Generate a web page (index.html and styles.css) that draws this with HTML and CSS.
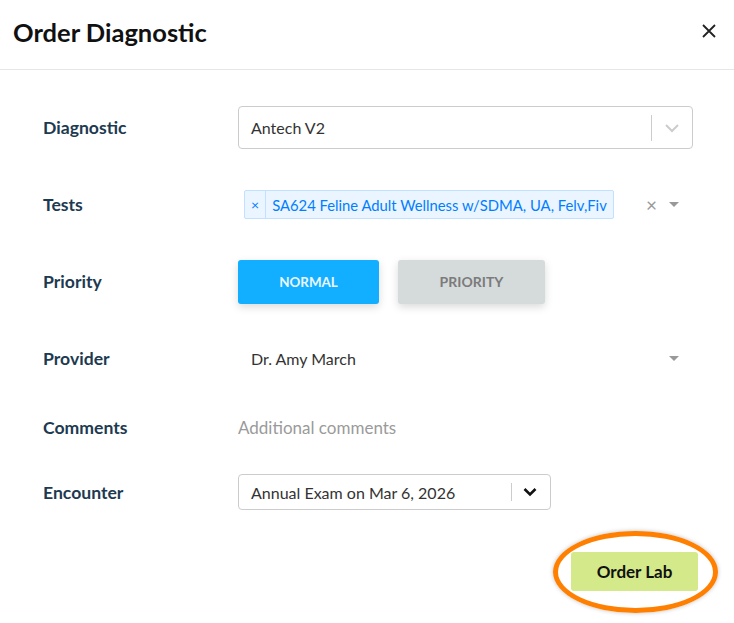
FILE: index.html
```html
<!DOCTYPE html>
<html lang="en">
  <head>
    <meta charset="UTF-8" />
    <title>Order Diagnostic</title>
    <link rel="stylesheet" href="styles.css">
  </head>
  <body>
    <div class="modal">
      <div class="modal-header">
        <h2 class="modal-title">Order Diagnostic</h2>
        <button class="close-btn" aria-label="Close">
          <svg width="16" height="16" viewBox="0 0 16 16">
            <path d="M2 2 L14 14 M14 2 L2 14" stroke="#222" stroke-width="1.8" fill="none" />
          </svg>
        </button>
      </div>

      <div class="modal-body">
        <div class="form-row">
          <label class="form-label">Diagnostic</label>
          <div class="select-box wide">
            <span class="select-value">Antech V2</span>
            <span class="select-sep"></span>
            <svg class="chevron" width="16" height="16" viewBox="0 0 16 16">
              <path d="M2 5 L8 11 L14 5" stroke="#ccc" stroke-width="2" fill="none" />
            </svg>
          </div>
        </div>

        <div class="form-row">
          <label class="form-label">Tests</label>
          <div class="multi-select">
            <div class="tag">
              <span class="tag-remove">×</span>
              <span class="tag-label">SA624 Feline Adult Wellness w/SDMA, UA, Felv,Fiv</span>
            </div>
            <span class="clear-x">×</span>
            <span class="caret"></span>
          </div>
        </div>

        <div class="form-row">
          <label class="form-label">Priority</label>
          <div class="priority-group">
            <button class="priority-btn active">NORMAL</button>
            <button class="priority-btn">PRIORITY</button>
          </div>
        </div>

        <div class="form-row">
          <label class="form-label">Provider</label>
          <div class="plain-select">
            <span class="select-value">Dr. Amy March</span>
            <span class="caret"></span>
          </div>
        </div>

        <div class="form-row short">
          <label class="form-label">Comments</label>
          <div class="comment-input">Additional comments</div>
        </div>

        <div class="form-row short">
          <label class="form-label">Encounter</label>
          <div class="select-box narrow">
            <span class="select-value">Annual Exam on Mar 6, 2026</span>
            <span class="select-sep"></span>
            <svg class="chevron" width="16" height="16" viewBox="0 0 16 16">
              <path d="M2.5 5 L8 10.5 L13.5 5" stroke="#111" stroke-width="2.6" fill="none" />
            </svg>
          </div>
        </div>
      </div>

      <div class="modal-footer">
        <div class="highlight">
          <button class="order-btn">Order Lab</button>
        </div>
      </div>
    </div>
  </body>
</html>
```

FILE: styles.css
```css
body {
  margin: 0;
  background: #fff;
  font-family: Lato, "Liberation Sans", sans-serif;
  color: #333;
}

.modal {
  width: 734px;
  height: 623px;
  overflow: hidden;
}

.modal-header {
  height: 69px;
  border-bottom: 1px solid #e6e6e6;
  display: flex;
  align-items: center;
  justify-content: space-between;
  padding: 0 17px 0 13px;
}

.modal-title {
  margin: 0;
  font-size: 25.5px;
  font-weight: 700;
  color: #111;
  padding-bottom: 6px;
}

.close-btn {
  background: none;
  border: none;
  padding: 0;
  display: flex;
  margin-bottom: 8px;
}

.modal-body {
  padding: 36px 41px 0 43px;
  display: flex;
  flex-direction: column;
  gap: 34px;
}

.form-row {
  display: flex;
  align-items: center;
  height: 43px;
}

.form-row.short {
  height: 36px;
  margin-top: -5px;
}

.form-label {
  width: 195px;
  flex-shrink: 0;
  font-size: 17.6px;
  font-weight: 700;
  color: #1d3a50;
}

.select-box {
  height: 100%;
  box-sizing: border-box;
  border: 1px solid #ccc;
  border-radius: 4px;
  display: flex;
  align-items: center;
  padding: 0 12px;
}

.select-box.wide {
  flex: 1;
}

.select-box.narrow {
  width: 313px;
}

.select-value {
  flex: 1;
  font-size: 16px;
  color: #333;
}

.select-sep {
  width: 1px;
  height: 26px;
  background: #ccc;
  margin: 0 12px 0 8px;
}

.select-box.narrow .select-sep {
  height: 18px;
  margin: 0 10px 0 8px;
}

.multi-select {
  flex: 1;
  display: flex;
  align-items: center;
  padding-left: 6px;
}

.tag {
  display: flex;
  align-items: stretch;
  height: 29px;
  box-sizing: border-box;
  background: #ebf5ff;
  border: 1px solid #c2e0ff;
  border-radius: 2px;
  color: #007eff;
}

.tag-remove {
  display: flex;
  align-items: center;
  padding: 0 6px;
  border-right: 1px solid #c2e0ff;
  font-size: 14px;
}

.tag-label {
  display: flex;
  align-items: center;
  padding: 0 6px;
  font-size: 14.8px;
}

.clear-x {
  margin-left: auto;
  color: #999;
  font-size: 19px;
  margin-right: 12px;
}

.caret {
  width: 0;
  height: 0;
  border-left: 5px solid transparent;
  border-right: 5px solid transparent;
  border-top: 5px solid #999;
  margin-right: 14px;
}

.priority-group {
  display: flex;
  gap: 19px;
  height: 44px;
}

.priority-btn {
  width: 141px;
  height: 44px;
  border: none;
  border-radius: 3px;
  background: #d5dadb;
  color: #7b7b7b;
  font-family: inherit;
  font-size: 14px;
  font-weight: 700;
  box-shadow: 0 3px 8px rgba(0, 0, 0, 0.15);
}

.priority-btn + .priority-btn {
  width: 147px;
}

.priority-btn.active {
  background: #12aeff;
  color: #eaf6ff;
  font-size: 13.4px;
}

.plain-select {
  flex: 1;
  display: flex;
  align-items: center;
  padding-left: 13px;
}

.comment-input {
  font-size: 17px;
  color: #9a9a9a;
}

.modal-footer {
  display: flex;
  justify-content: flex-end;
  padding: 21px 16px 0 0;
}

.highlight {
  border: 5px solid #ff8000;
  border-radius: 50%;
  padding: 16px 15px 17px 13px;
  box-shadow: 0 0 4px rgba(0, 0, 0, 0.25);
}

.order-btn {
  width: 127px;
  height: 39px;
  border: none;
  border-radius: 3px;
  background: #d3e98a;
  color: #111;
  font-family: inherit;
  font-size: 17px;
  font-weight: 700;
}
```
